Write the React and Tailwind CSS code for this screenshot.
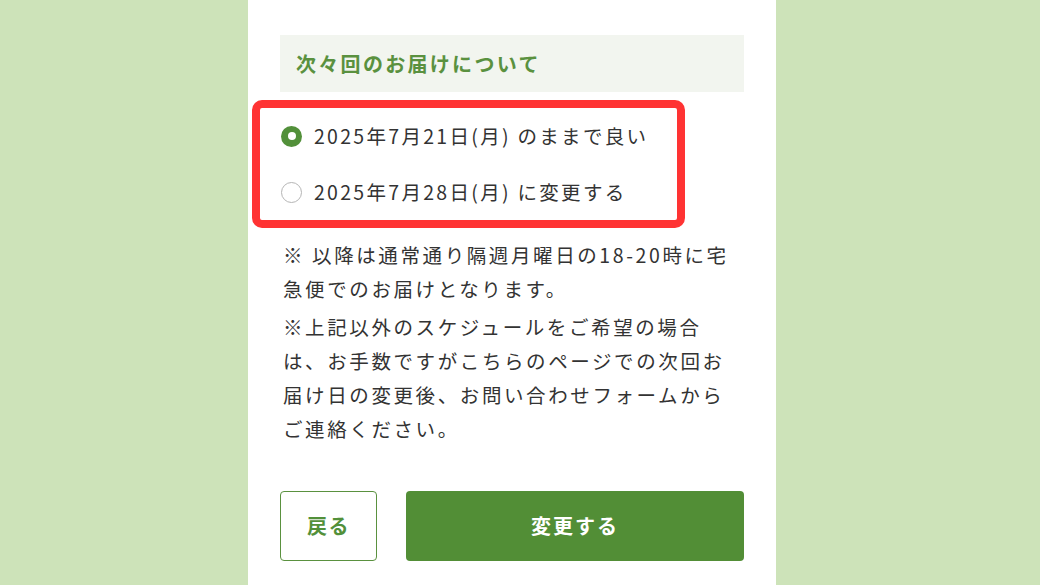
import React, { useState } from "react";

const FONT = { fontFamily: '"Noto Sans CJK JP", "Noto Sans", sans-serif' };

const options = [
  { id: "keep", label: "2025年7月21日(月) のままで良い" },
  { id: "change", label: "2025年7月28日(月) に変更する" },
];

const Radio = ({ checked }) =>
  checked ? (
    <span className="flex h-[21px] w-[21px] shrink-0 items-center justify-center rounded-full bg-[#52903a]">
      <span className="h-[8px] w-[8px] rounded-full bg-white" />
    </span>
  ) : (
    <span className="h-[21px] w-[21px] shrink-0 rounded-full border border-[#b5b5b5] bg-white" />
  );

const App = () => {
  const [selected, setSelected] = useState("keep");

  return (
    <div className="min-h-[585px] w-full bg-[#cde3b9]" style={FONT}>
      <div className="ml-[248px] min-h-[585px] w-[528px] bg-white px-8 pt-[35px]">
        {/* 見出し */}
        <div className="flex h-[57px] items-center bg-[#f2f5ef] pl-4">
          <h2 className="text-[20px] font-bold tracking-[2.3px] text-[#5a913f]">
            次々回のお届けについて
          </h2>
        </div>

        {/* 選択肢 */}
        <div className="relative mt-4">
          {options.map((opt) => (
            <label
              key={opt.id}
              className="flex h-14 cursor-pointer items-center gap-[12px] pl-[1px]"
              onClick={() => setSelected(opt.id)}
            >
              <Radio checked={selected === opt.id} />
              <span className="text-[19.5px] tracking-[2.3px] text-[#333333]">{opt.label}</span>
            </label>
          ))}
          {/* 注釈の赤枠 */}
          <div className="pointer-events-none absolute left-[-28px] top-[-8px] h-[128px] w-[433px] rounded-[10px] border-[8px] border-[#ff3333]" />
        </div>

        {/* 注意書き */}
        <div className="mt-[18px] pl-[3px] text-[19.5px] leading-[34px] tracking-[2.6px] text-[#333333]">
          <p>※ 以降は通常通り隔週月曜日の18-20時に宅急便でのお届けとなります。</p>
          <p className="mt-[4px]">
            ※上記以外のスケジュールをご希望の場合は、お手数ですがこちらのページでの次回お届け日の変更後、お問い合わせフォームからご連絡ください。
          </p>
        </div>

        {/* ボタン */}
        <div className="mt-[45px] flex gap-[29px]">
          <button className="flex h-[70px] w-[97px] items-center justify-center rounded-[4px] border border-[#5a913f] bg-white text-[20px] font-bold tracking-[1.5px] text-[#52903a]">
            戻る
          </button>
          <button className="flex h-[70px] flex-1 items-center justify-center rounded-[4px] bg-[#528e36] text-[20px] font-bold tracking-[2px] text-white">
            変更する
          </button>
        </div>
      </div>
    </div>
  );
};

export default App;
